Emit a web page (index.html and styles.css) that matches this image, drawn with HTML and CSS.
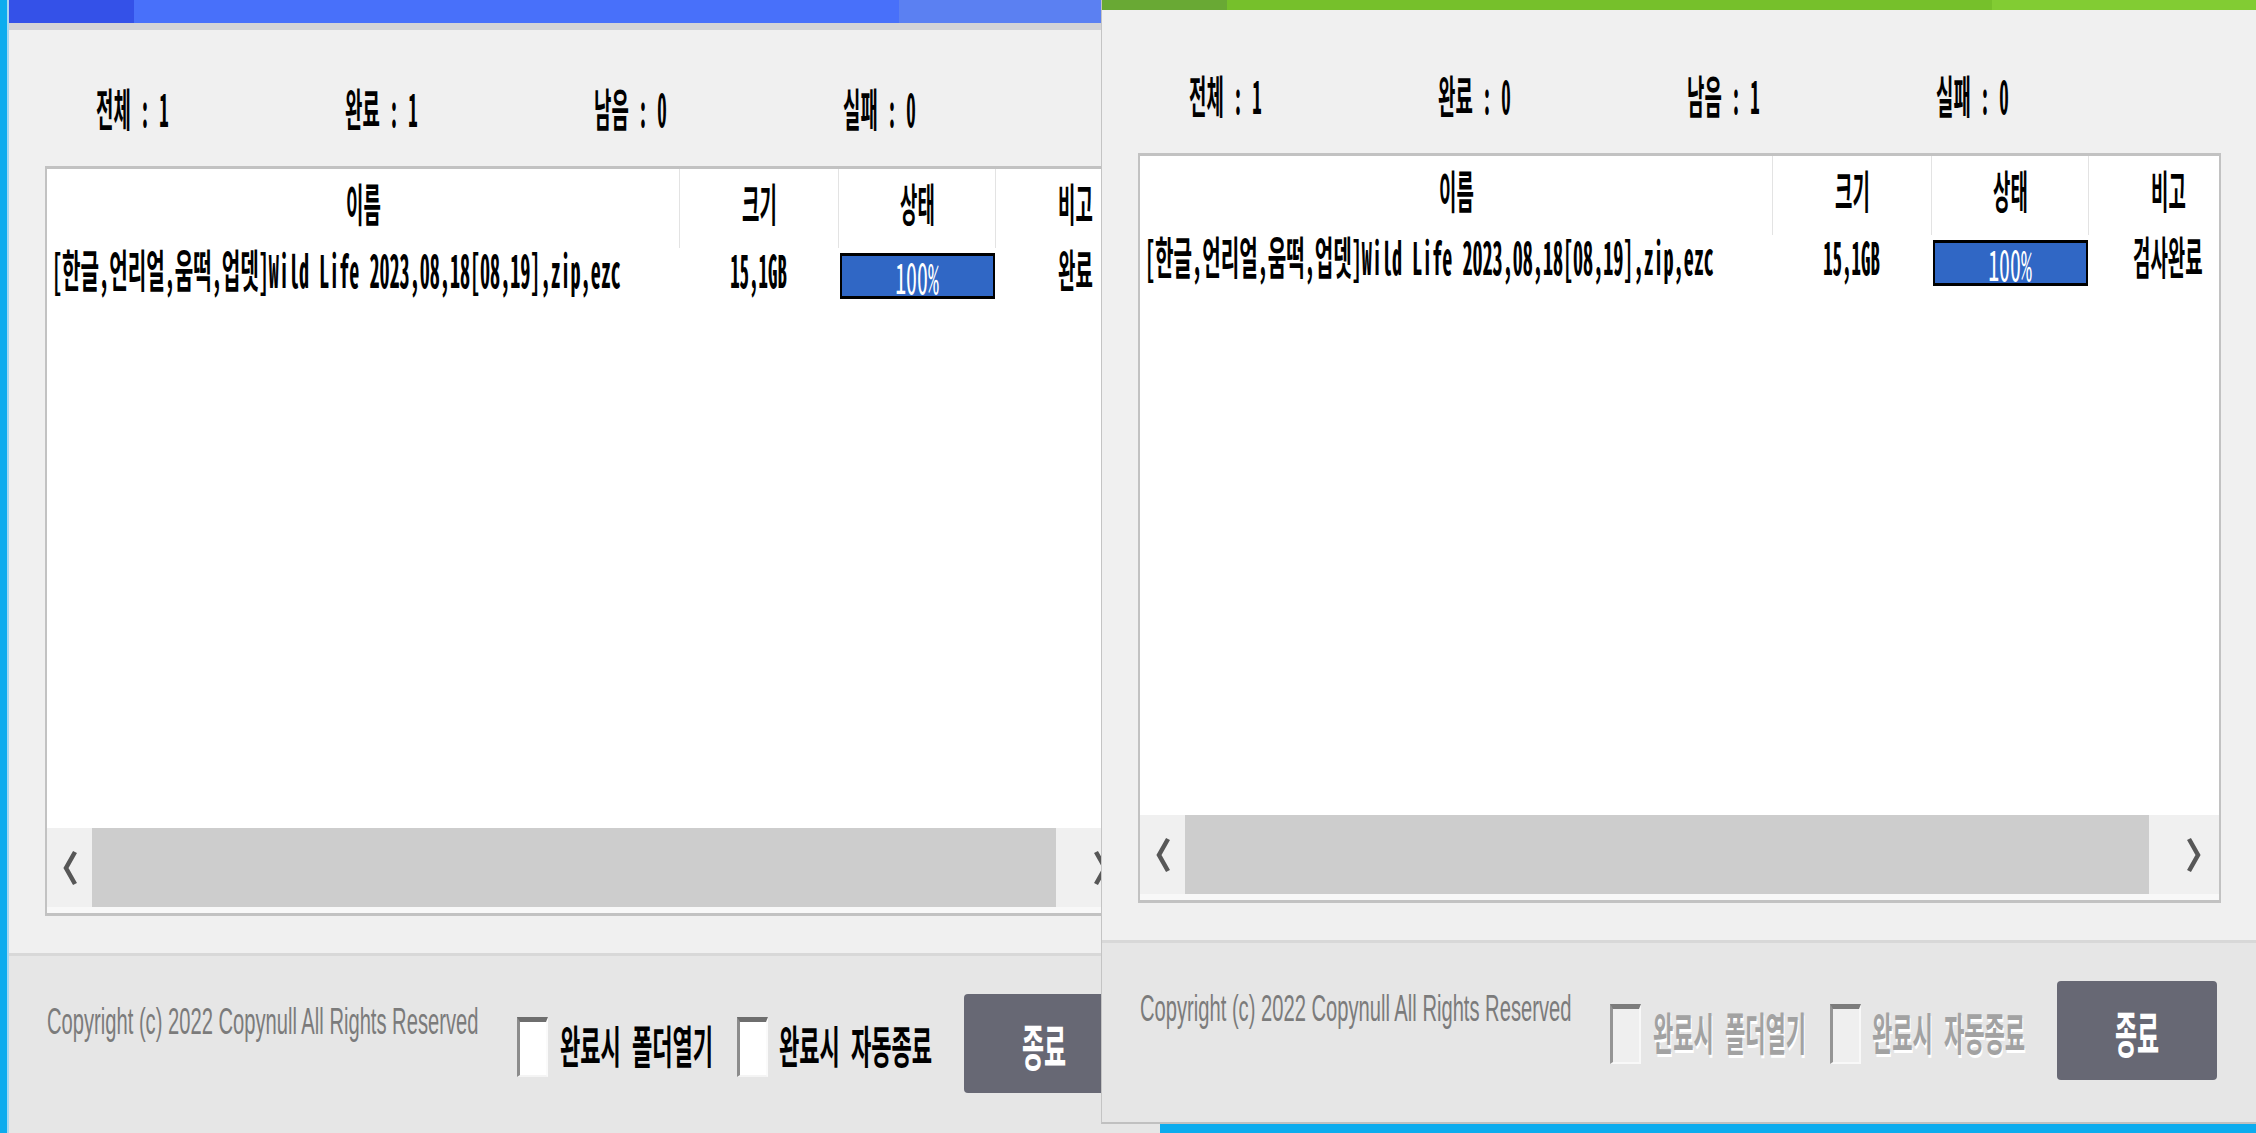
FILE: index.html
```html
<!DOCTYPE html>
<html>
  <head>
    <meta charset="utf-8">
    <title>Copynull - 검사</title>
    <link rel="stylesheet" href="styles.css">
  </head>
  <body>
    <!-- first window: finished job -->
    <div class="win win-a">
      <div class="bar"><i class="s1"></i><i class="s2"></i><i class="s3"></i></div>
      <div class="stats">
        <div class="cell"><span class="t">전체 : 1</span></div>
        <div class="cell"><span class="t">완료 : 1</span></div>
        <div class="cell"><span class="t">남음 : 0</span></div>
        <div class="cell"><span class="t">실패 : 0</span></div>
      </div>
      <div class="list">
        <div class="row head">
          <div class="col c-name"><span class="t">이름</span></div>
          <div class="col c-size"><span class="t">크기</span></div>
          <div class="col c-stat"><span class="t">상태</span></div>
          <div class="col c-note"><span class="t">비고</span></div>
        </div>
        <div class="row item">
          <div class="col c-name"><span class="t">[한글,언리얼,움떡,업뎃]Wild Life 2023,08,18[08,19],zip,ezc</span></div>
          <div class="col c-size"><span class="t">15,1GB</span></div>
          <div class="col c-stat"><div class="prog"><span class="t pct">100%</span></div></div>
          <div class="col c-note"><span class="t">완료</span></div>
        </div>
        <div class="fill"></div>
        <div class="hscroll">
          <div class="arr"><svg width="16" height="36" viewBox="0 0 16 36"><polyline points="13,2 4,18 13,34" fill="none" stroke="#575757" stroke-width="4.5"/></svg></div>
          <div class="thumb"></div>
          <div class="arr r"><svg width="16" height="36" viewBox="0 0 16 36"><polyline points="3,2 12,18 3,34" fill="none" stroke="#575757" stroke-width="4.5"/></svg></div>
        </div>
        <div class="gap"></div>
      </div>
      <div class="foot">
        <div class="copy-cell"><span class="copy">Copyright (c) 2022 Copynull All Rights Reserved</span></div>
        <div class="chk"></div>
        <div class="lbl"><span class="t">완료시 폴더열기</span></div>
        <div class="chk"></div>
        <div class="lbl lbl2"><span class="t">완료시 자동종료</span></div>
        <div class="btn"><span class="t">종료</span></div>
      </div>
    </div>

    <!-- second window: checking, options disabled -->
    <div class="win win-b">
      <div class="bar"><i class="s1"></i><i class="s2"></i><i class="s3"></i></div>
      <div class="stats">
        <div class="cell"><span class="t">전체 : 1</span></div>
        <div class="cell"><span class="t">완료 : 0</span></div>
        <div class="cell"><span class="t">남음 : 1</span></div>
        <div class="cell"><span class="t">실패 : 0</span></div>
      </div>
      <div class="list">
        <div class="row head">
          <div class="col c-name"><span class="t">이름</span></div>
          <div class="col c-size"><span class="t">크기</span></div>
          <div class="col c-stat"><span class="t">상태</span></div>
          <div class="col c-note"><span class="t">비고</span></div>
        </div>
        <div class="row item">
          <div class="col c-name"><span class="t">[한글,언리얼,움떡,업뎃]Wild Life 2023,08,18[08,19],zip,ezc</span></div>
          <div class="col c-size"><span class="t">15,1GB</span></div>
          <div class="col c-stat"><div class="prog"><span class="t pct">100%</span></div></div>
          <div class="col c-note"><span class="t">검사완료</span></div>
        </div>
        <div class="fill"></div>
        <div class="hscroll">
          <div class="arr"><svg width="16" height="36" viewBox="0 0 16 36"><polyline points="13,2 4,18 13,34" fill="none" stroke="#575757" stroke-width="4.5"/></svg></div>
          <div class="thumb"></div>
          <div class="arr r"><svg width="16" height="36" viewBox="0 0 16 36"><polyline points="3,2 12,18 3,34" fill="none" stroke="#575757" stroke-width="4.5"/></svg></div>
        </div>
        <div class="gap"></div>
      </div>
      <div class="foot">
        <div class="copy-cell"><span class="copy">Copyright (c) 2022 Copynull All Rights Reserved</span></div>
        <div class="chk off"></div>
        <div class="lbl off"><span class="t">완료시 폴더열기</span></div>
        <div class="chk off"></div>
        <div class="lbl lbl2 off"><span class="t">완료시 자동종료</span></div>
        <div class="btn"><span class="t">종료</span></div>
      </div>
    </div>
  </body>
</html>
```

FILE: styles.css
```css
* {
  box-sizing: border-box;
}

body {
  margin: 0;
  width: 2256px;
  height: 1133px;
  overflow: hidden;
  position: relative;
  background: #0cacee;
  font-family: "Noto Sans Mono CJK KR", "Noto Sans CJK KR", sans-serif;
  color: #000;
}

/* windows sit on the desktop */
.win {
  position: absolute;
  width: 1160px;
  height: 1137px;
  background: #f0f0f0;
  display: flex;
  flex-direction: column;
  overflow: hidden;
}

.win-a {
  left: 7px;
  top: 0;
  width: 1153px;
  border-left: 2px solid #a8d8f0;
}

.win-b {
  left: 1101px;
  top: -13px;
  border-left: 1px solid #c4c4c4;
  border-bottom: 2px solid #c0c0c0;
}

/* title bar */
.bar {
  flex: none;
  height: 30px;
  display: flex;
  border-bottom: 7px solid #d3d3d7;
}

.bar i {
  display: block;
  height: 100%;
}

.bar .s1 { width: 125px; background: #3451e8; }
.bar .s2 { width: 765px; background: #4870fa; }
.bar .s3 { flex: 1; background: #5b80f2; }

.win-b .bar { border-bottom-color: #f0f0f0; }
.win-b .s1 { background: #69a934; }
.win-b .s2 { background: #76c02b; }
.win-b .s3 { background: #82cc33; }

/* squeezed text, like the stretched bitmap font */
.t {
  display: inline-block;
  white-space: nowrap;
  font-size: 45px;
  line-height: 45px;
  font-weight: 700;
  transform: scaleX(.42);
  transform-origin: center;
}

/* counters */
.stats {
  flex: none;
  display: flex;
  align-items: center;
  height: 40px;
  margin: 58px 0 38px 87px;
}

.stats .cell {
  width: 249px;
}

.stats .t {
  transform-origin: left center;
}

/* file list */
.list {
  flex: none;
  width: 1083px;
  height: 750px;
  margin-left: 36px;
  background: #fff;
  border: solid #c2c2c2;
  border-width: 3px 2px;
  display: flex;
  flex-direction: column;
  overflow: hidden;
}

.row {
  flex: none;
  display: flex;
}

.col {
  flex: none;
  display: flex;
  justify-content: center;
}

.c-name { width: 632px; }
.c-size { width: 159px; }
.c-stat { width: 157px; }
.c-note { width: 160px; }

.head {
  height: 79px;
}

.head .col {
  align-items: center;
  border-left: 1px solid #e3e3e3;
  padding-bottom: 12px;
}

.head .col:first-child {
  border-left: 0;
}

.item {
  height: 56px;
}

.item .col {
  height: 40px;
  align-items: center;
}

.item .c-name {
  justify-content: flex-start;
  padding-left: 5px;
}

.item .c-name .t {
  transform: scaleX(.447);
  transform-origin: left center;
}

.item .c-stat {
  height: auto;
  align-items: flex-start;
  justify-content: flex-start;
  padding: 5px 0 0 2px;
}

.prog {
  width: 155px;
  height: 46px;
  background: #3067c5;
  border: solid #000;
  border-width: 3px 2px;
  display: flex;
  align-items: center;
  justify-content: center;
}

.pct {
  color: #fff;
  font-size: 42px;
  line-height: 40px;
  font-weight: 400;
  transform: scaleX(.52);
}

.fill {
  flex: 1;
}

/* horizontal scrollbar */
.hscroll {
  flex: none;
  height: 79px;
  display: flex;
  background: #f0f0f0;
}

.arr {
  flex: none;
  width: 45px;
  display: flex;
  align-items: center;
  justify-content: center;
}

.arr.r {
  width: 90px;
}

.thumb {
  flex: none;
  width: 964px;
  background: #cdcdcd;
}

.gap {
  flex: none;
  height: 6px;
  background: #f8f8f8;
}

/* bottom bar */
.foot {
  flex: 1;
  margin-top: 37px;
  background: #e6e6e6;
  border-top: 3px solid #d8d8d8;
  display: flex;
  align-items: flex-start;
  padding-left: 38px;
}

.copy-cell {
  flex: none;
  width: 470px;
  margin-top: 46px;
}

.copy {
  display: inline-block;
  white-space: nowrap;
  font-family: "Liberation Sans", Arial, sans-serif;
  font-size: 36px;
  line-height: 40px;
  color: #7b7b7b;
  transform: scaleX(.56);
  transform-origin: left center;
}

.chk {
  flex: none;
  width: 31px;
  height: 60px;
  margin-top: 61px;
  background: #fff;
  border-style: solid;
  border-width: 5px 2px 2px 3px;
  border-color: #6e6e6e #fafafa #f4f4f4 #8c8c8c;
}

.chk.off {
  background: #efefef;
  border-color: #7c7c7c #f8f8f8 #f8f8f8 #959595;
}

.lbl {
  flex: none;
  width: 189px;
  height: 60px;
  margin-top: 58px;
  padding-left: 12px;
  display: flex;
  align-items: center;
}

.lbl2 {
  width: 196px;
  padding-left: 11px;
}

.lbl .t {
  transform: scaleX(.49);
  transform-origin: left center;
}

.lbl.off .t {
  color: #a2a2a2;
  text-shadow: 2px 3px 0 #fff;
}

.btn {
  flex: none;
  width: 160px;
  height: 99px;
  margin-top: 38px;
  background: #676874;
  border-radius: 4px;
  display: flex;
  align-items: center;
  justify-content: center;
}

.btn .t {
  color: #fff;
  font-size: 50px;
  line-height: 50px;
  transform: scaleX(.48);
}
```
